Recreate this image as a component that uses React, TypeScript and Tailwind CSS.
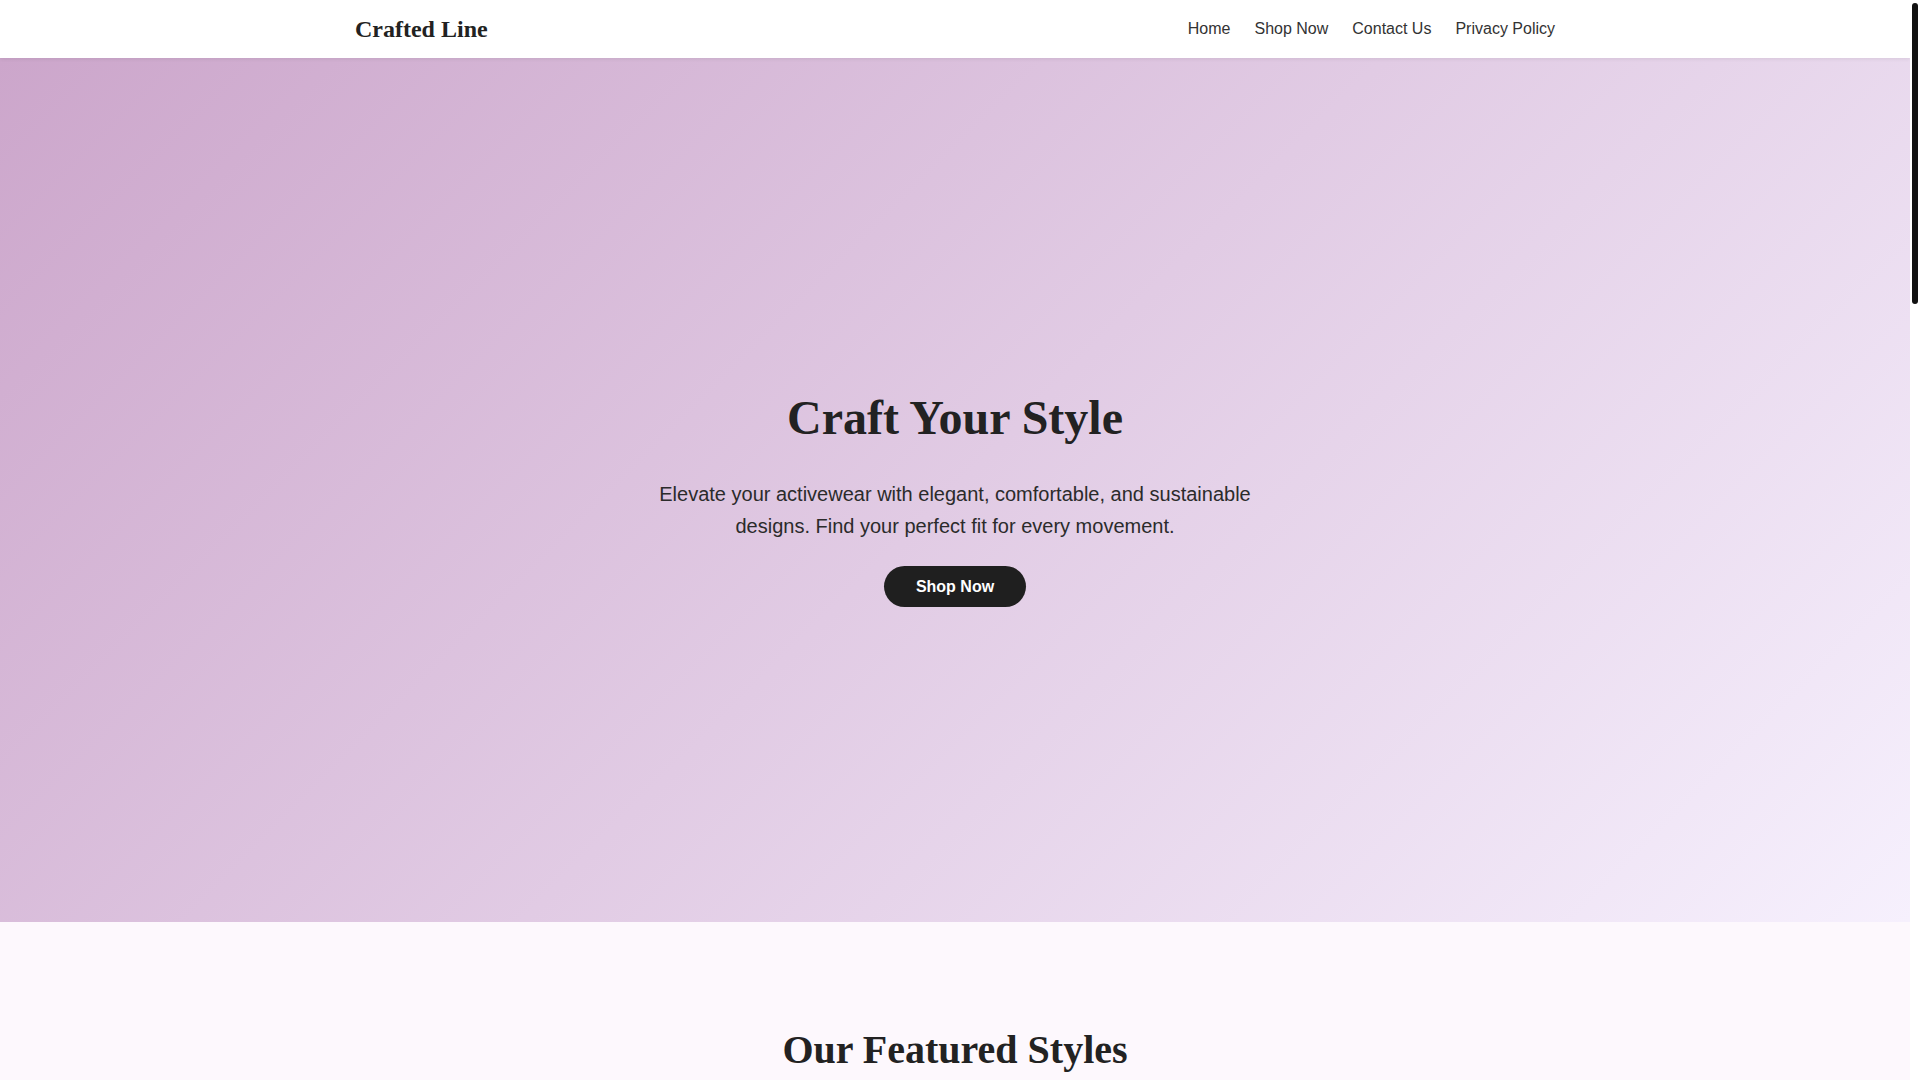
import React from "react";

const serif = { fontFamily: '"Liberation Serif", "Times New Roman", serif' };

const products = [
  { name: "Aura Leggings", price: "$68.00", tone: "bg-[#e9d6ea]" },
  { name: "Flow Sports Bra", price: "$48.00", tone: "bg-[#efe2f3]" },
  { name: "Contour Tank", price: "$42.00", tone: "bg-[#e3cfe6]" },
  { name: "Serene Joggers", price: "$74.00", tone: "bg-[#f1e6f4]" },
  { name: "Balance Hoodie", price: "$88.00", tone: "bg-[#e6d3e9]" },
  { name: "Move Shorts", price: "$38.00", tone: "bg-[#ecdcef]" },
];

export default function App() {
  return (
    <div className="relative bg-white">
      <div className="fixed right-0 top-0 z-50 h-screen w-[10px] bg-white">
        <div className="absolute left-[2px] top-[3px] h-[301px] w-[6px] rounded-full bg-[#111]" />
      </div>
      <div className="mr-[10px] bg-[#fdf8fd] text-[#222] font-['Liberation_Sans',Arial,sans-serif]">
        <header className="relative z-10 h-[58px] bg-white shadow-[0_1px_4px_rgba(0,0,0,0.08)]">
          <div className="mx-auto flex h-full max-w-[1200px] items-center justify-between">
            <a href="#" className="text-2xl font-bold text-[#222]" style={serif}>
              Crafted Line
            </a>
            <nav className="flex items-center gap-6 text-base text-[#333]">
              <a href="#">Home</a>
              <a href="#">Shop Now</a>
              <a href="#">Contact Us</a>
              <a href="#">Privacy Policy</a>
            </nav>
          </div>
        </header>

        <section className="flex h-[864px] flex-col items-center justify-center bg-[linear-gradient(135deg,#cca6cb,#f6f0fd)] px-4 pt-4 text-center">
          <h1 className="mb-8 text-5xl font-bold leading-[1.2] text-[#222]" style={serif}>
            Craft Your Style
          </h1>
          <p className="mb-6 max-w-[600px] text-xl leading-[32px] text-[#2b2b2b]">
            Elevate your activewear with elegant, comfortable, and sustainable designs. Find your perfect fit for every movement.
          </p>
          <a
            href="#"
            className="rounded-full bg-[#1f1f1f] px-8 py-3 text-base font-bold leading-[17px] text-white"
          >
            Shop Now
          </a>
        </section>

        <section className="px-4 pb-20 pt-[104px]">
          <h2 className="mb-12 text-center text-[40px] font-bold leading-[1.2] text-[#222]" style={serif}>
            Our Featured Styles
          </h2>
          <div className="mx-auto grid max-w-[1200px] grid-cols-3 gap-8">
            {products.map((p) => (
              <div key={p.name} className="overflow-hidden rounded-xl bg-white shadow-sm">
                <div className={`h-[360px] ${p.tone}`} />
                <div className="p-5 text-center">
                  <h3 className="mb-2 text-xl font-bold" style={serif}>{p.name}</h3>
                  <p className="mb-4 text-base text-[#555]">{p.price}</p>
                  <a href="#" className="inline-block rounded-full bg-[#1f1f1f] px-6 py-2 text-sm font-bold text-white">
                    Add to Cart
                  </a>
                </div>
              </div>
            ))}
          </div>
        </section>

        <section className="bg-[#f4eaf5] px-4 py-20">
          <h2 className="mb-12 text-center text-[40px] font-bold leading-[1.2]" style={serif}>
            Why Crafted Line
          </h2>
          <div className="mx-auto grid max-w-[1200px] grid-cols-3 gap-8 text-center">
            {[
              ["Elegant Design", "Timeless silhouettes that move with you from studio to street."],
              ["All-Day Comfort", "Soft, breathable fabrics crafted for every stretch and stride."],
              ["Sustainable Materials", "Recycled fibers and responsible production in every piece."],
            ].map(([t, d]) => (
              <div key={t} className="rounded-xl bg-white p-8">
                <h3 className="mb-3 text-2xl font-bold" style={serif}>{t}</h3>
                <p className="text-base leading-7 text-[#444]">{d}</p>
              </div>
            ))}
          </div>
        </section>

        <section className="px-4 py-20">
          <h2 className="mb-12 text-center text-[40px] font-bold leading-[1.2]" style={serif}>
            What Our Customers Say
          </h2>
          <div className="mx-auto grid max-w-[1200px] grid-cols-2 gap-8">
            {[
              ["“The most comfortable leggings I have ever owned.”", "— Maya R."],
              ["“Beautiful designs and great quality. I wear them everywhere.”", "— Jordan L."],
            ].map(([q, a]) => (
              <div key={a} className="rounded-xl bg-white p-10 shadow-sm">
                <p className="mb-4 text-lg italic leading-8 text-[#333]">{q}</p>
                <p className="text-base font-bold text-[#555]">{a}</p>
              </div>
            ))}
          </div>
        </section>

        <section className="bg-[linear-gradient(135deg,#e3cbe3,#f6f0fd)] px-4 py-24 text-center">
          <h2 className="mb-4 text-[40px] font-bold leading-[1.2]" style={serif}>
            Join Our Community
          </h2>
          <p className="mx-auto mb-8 max-w-[600px] text-lg text-[#333]">
            Sign up for exclusive offers, new arrivals and styling inspiration.
          </p>
          <div className="mx-auto flex max-w-[480px] gap-3">
            <input
              className="flex-1 rounded-full border border-[#ccc] bg-white px-5 py-3 text-base"
              placeholder="Your email address"
            />
            <button className="rounded-full bg-[#1f1f1f] px-8 py-3 text-base font-bold text-white">
              Subscribe
            </button>
          </div>
        </section>

        <footer className="bg-[#1f1f1f] px-4 pb-12 pt-16 text-[#ddd]">
          <div className="mx-auto grid max-w-[1200px] grid-cols-3 gap-8">
            <div>
              <p className="mb-3 text-2xl font-bold text-white" style={serif}>Crafted Line</p>
              <p className="text-sm leading-6">Elegant, comfortable and sustainable activewear.</p>
            </div>
            <div className="flex flex-col gap-2 text-sm">
              <a href="#">Home</a>
              <a href="#">Shop Now</a>
              <a href="#">Contact Us</a>
              <a href="#">Privacy Policy</a>
            </div>
            <div className="text-sm leading-6">
              <p>hello@craftedline.com</p>
              <p>+1 (555) 012-3456</p>
            </div>
          </div>
          <p className="mt-12 text-center text-sm text-[#999]">© 2024 Crafted Line. All rights reserved.</p>
        </footer>
      </div>
    </div>
  );
}
